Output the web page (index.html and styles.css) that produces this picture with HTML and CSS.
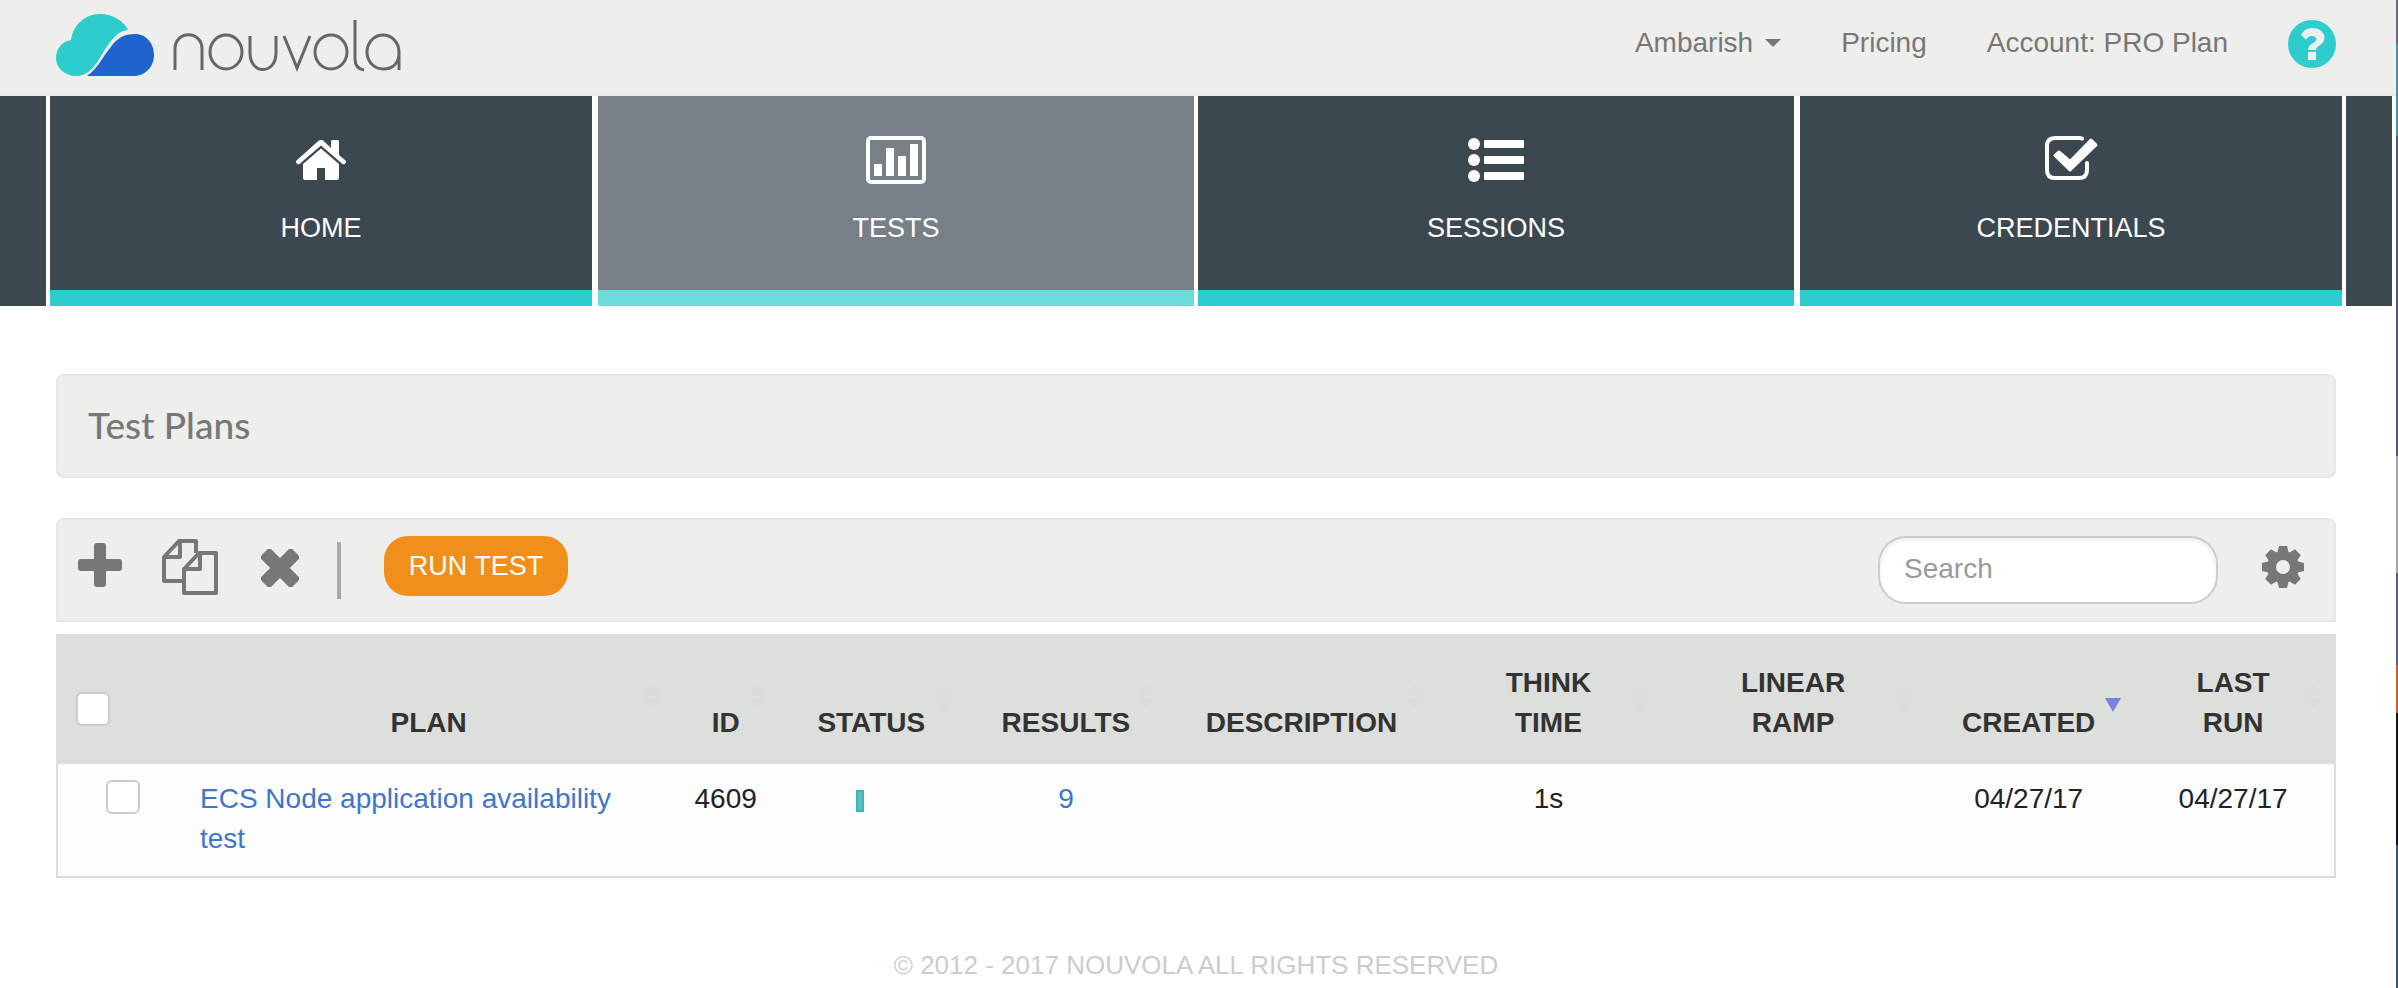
FILE: index.html
```html
<!DOCTYPE html>
<html lang="en">
<head>
<meta charset="utf-8">
<title>Nouvola - Test Plans</title>
<link rel="stylesheet" href="styles.css">
</head>
<body>
<div class="screen">
<div class="page">
  <header class="topbar">
    <a class="brand" href="#" aria-label="nouvola">
      <svg class="logo" viewBox="0 0 346 64" aria-hidden="true">
        <path fill="#2ecdcd" d="M20 63C9 63 0 55 0 45C0 35 7 28 15 27C17 12 29 1 44 1C57 1 68 8 72 17C62 18 57 25 50 35C42 47 36 63 20 63Z"/>
        <path fill="#2063cf" d="M31 63C41 56 46 45 54 35C61 25 68 21 79 21C90 21 98 30 98 42C98 54 89 63 78 63Z"/>
        <g fill="none" stroke="#666" stroke-width="3">
          <path d="M119 57V36C119 17 146 17 146 36V57"/>
          <ellipse cx="170" cy="39" rx="16" ry="17"/>
          <path d="M194 23V40C194 62 220 62 220 40V23"/>
          <path d="M228 23L241 55L254 23"/>
          <ellipse cx="275" cy="39" rx="16" ry="17"/>
          <path d="M299 7V46C299 53 302 56 308 57"/>
          <path d="M343 57V39A16 17 0 1 0 327 56C337 56 343 50 343 39"/>
        </g>
      </svg>
    </a>
    <nav class="account" aria-label="Account">
      <a href="#" class="user">Ambarish <span class="caret"></span></a>
      <a href="#">Pricing</a>
      <a href="#">Account: PRO Plan</a>
      <a href="#" class="help" aria-label="Help">
        <svg viewBox="0 0 48 48"><circle cx="24" cy="24" r="24" fill="#2ecdcd"/><path fill="#eeeeec" d="M20 40h8v-8h-8zM13 15l5 4.500C20 17 21.500 16 24 16c2.500 0 4.500 1.300 4.500 3.200C28.500 23 20 23 20 30h8c0-4.500 8.500-5 8.500-12.500C36.500 12 31 8 24.500 8C19 8 15.500 10.500 13 15z"/></svg>
      </a>
    </nav>
  </header>

  <nav class="tabs" aria-label="Main">
    <span class="tab-end"></span>
    <a class="tab" href="#">
      <svg class="tab-icon" viewBox="0 0 60 48"><path fill="#fff" d="M30 4c1 0 2 .4 2.700 1L40 12V5.500C40 4.600 40.600 4 41.500 4h5c.9 0 1.500.6 1.500 1.500V19l6.500 5.500c.8.800.8 1.500.2 2.200l-1 1.200c-.6.600-1.500.6-2.200 0L30 9.500L8.500 27.900c-.7.600-1.600.6-2.200 0l-1-1.200c-.6-.7-.6-1.400.2-2.200L27.300 5C28 4.400 29 4 30 4zM30 12.500L48 28v14c0 1.200-.8 2-2 2H34V32h-8v12H14c-1.200 0-2-.8-2-2V28z"/></svg>
      <span>HOME</span>
    </a>
    <a class="tab active wide" href="#" aria-current="page">
      <svg class="tab-icon" viewBox="0 0 60 48"><rect x="2" y="2" width="56" height="44" rx="3" fill="none" stroke="#fff" stroke-width="4"/><path fill="#fff" d="M8 28h8v12H8zM20 12h8v28h-8zM32 20h8v20h-8zM44 8h8v32h-8z"/></svg>
      <span>TESTS</span>
    </a>
    <a class="tab wide" href="#">
      <svg class="tab-icon" viewBox="0 0 60 48"><g fill="#fff"><circle cx="8" cy="8" r="6"/><circle cx="8" cy="24" r="6"/><circle cx="8" cy="40" r="6"/><rect x="18" y="4" width="40" height="8" rx="1"/><rect x="18" y="20" width="40" height="8" rx="1"/><rect x="18" y="36" width="40" height="8" rx="1"/></g></svg>
      <span>SESSIONS</span>
    </a>
    <a class="tab" href="#">
      <svg class="tab-icon" viewBox="0 0 60 48"><path fill="none" stroke="#fff" stroke-width="4" stroke-linecap="round" d="M41 2.500Q40 2 38 2H14Q6 2 6 10V34Q6 42 14 42H38Q46 42 46 34V27"/><path fill="#fff" stroke="#fff" stroke-width="3" stroke-linejoin="round" d="M18 16L29 25.500L50 4L55 9L29 34L14 19.500Z"/></svg>
      <span>CREDENTIALS</span>
    </a>
    <span class="tab-end"></span>
  </nav>

  <main class="content">
    <section class="panel heading"><h1>Test Plans</h1></section>

    <section class="panel toolbar">
      <button class="tool add" type="button" aria-label="Add"><svg width="44" height="44" viewBox="0 0 44 44"><path fill="#777" d="M19 0h6a3 3 0 0 1 3 3v13h13a3 3 0 0 1 3 3v6a3 3 0 0 1-3 3H28v13a3 3 0 0 1-3 3h-6a3 3 0 0 1-3-3V28H3a3 3 0 0 1-3-3v-6a3 3 0 0 1 3-3h13V3a3 3 0 0 1 3-3z"/></svg></button>
      <button class="tool copy" type="button" aria-label="Copy"><svg width="56" height="56" viewBox="0 0 56 56"><g fill="none" stroke="#777" stroke-width="4" stroke-linejoin="round"><path d="M22 42H2V18L17 2H34V14M2 18H18V2"/><path d="M22 30L37 14H54V54H22V30H38V14"/></g></svg></button>
      <button class="tool delete" type="button" aria-label="Delete"><svg width="38" height="38" viewBox="-19 -19 38 38"><g fill="#777"><rect x="-22" y="-7" width="44" height="14" rx="3" transform="rotate(45)"/><rect x="-22" y="-7" width="44" height="14" rx="3" transform="rotate(-45)"/></g></svg></button>
      <span class="divider"></span>
      <button class="run" type="button">RUN TEST</button>
      <input class="search" type="search" placeholder="Search" aria-label="Search">
      <button class="tool gear" type="button" aria-label="Settings"><svg width="42" height="42" viewBox="-21 -21 42 42"><g fill="#777"><path id="tooth" d="M-4-21h8l2 8h-12zM-4 21h8l2-8h-12z"/><use href="#tooth" transform="rotate(45)"/><use href="#tooth" transform="rotate(90)"/><use href="#tooth" transform="rotate(135)"/></g><circle r="11.500" fill="none" stroke="#777" stroke-width="9"/></svg></button>
    </section>

    <table class="plans">
      <colgroup><col class="c-check"><col class="c-plan"><col class="c-id"><col class="c-status"><col class="c-results"><col class="c-desc"><col class="c-think"><col class="c-ramp"><col class="c-created"><col></colgroup>
      <thead>
        <tr>
          <th class="check"><input type="checkbox" aria-label="Select all plans"></th>
          <th class="sort">PLAN</th>
          <th class="sort">ID</th>
          <th class="sort">STATUS</th>
          <th class="sort">RESULTS</th>
          <th class="sort">DESCRIPTION</th>
          <th class="sort">THINK<br>TIME</th>
          <th class="sort">LINEAR<br>RAMP</th>
          <th class="sorted" aria-sort="descending">CREATED</th>
          <th class="sort">LAST<br>RUN</th>
        </tr>
      </thead>
      <tbody>
        <tr>
          <td class="check"><input type="checkbox" aria-label="Select ECS Node application availability test"></td>
          <td class="plan"><a href="#">ECS Node application availability test</a></td>
          <td>4609</td>
          <td class="status"><span class="bar"></span></td>
          <td><a href="#">9</a></td>
          <td></td>
          <td>1s</td>
          <td></td>
          <td>04/27/17</td>
          <td>04/27/17</td>
        </tr>
      </tbody>
    </table>
  </main>

  <footer class="footer">© 2012 - 2017 NOUVOLA ALL RIGHTS RESERVED</footer>
</div>
<div class="edge"></div>
</div>
</body>
</html>
```
FILE: styles.css
```css
* { box-sizing: border-box; }

body {
  margin: 0;
  background: #fff;
  color: #222;
  font: 28px/40px "Liberation Sans", Arial, sans-serif;
}

a { color: #3f76cc; text-decoration: none; }
button { border: 0; padding: 0; background: none; font: inherit; cursor: pointer; }
svg { display: block; }

.screen { display: flex; min-height: 100vh; }
.page { flex: 1; min-width: 0; }
.edge {
  width: 2px;
  background: linear-gradient(#6b6a80 0 44px, #4a8fa5 44px 136px, #55527a 136px 456px, #a5a5a5 456px 573px, #5f5b7f 573px 665px, #c0602a 665px 713px, #15121a 713px 845px, #3f5570 845px);
}

/* Header */
.topbar {
  display: flex;
  justify-content: space-between;
  align-items: flex-start;
  height: 96px;
  padding: 0 60px 0 56px;
  background: #eeeeec;
  border-bottom: 2px solid #e7e7e5;
}
.logo { width: 346px; height: 64px; margin-top: 13px; }
.account { display: flex; align-items: flex-start; gap: 60px; padding-top: 23px; }
.account a { color: #777; }
.user { display: flex; align-items: center; gap: 12px; }
.caret { border: 8px solid transparent; border-top-color: #777; border-bottom: 0; }
.help { margin-top: -3px; }
.help svg { width: 48px; height: 48px; }

/* Navigation tabs */
.tabs { display: flex; height: 210px; padding-right: 4px; }
.tab-end { width: 46px; background: #3c4850; }
.tab {
  flex: 542;
  display: flex;
  flex-direction: column;
  align-items: center;
  gap: 24px;
  margin-left: 4px;
  padding-top: 40px;
  background: #3c4850;
  border-bottom: 16px solid #2ecdcd;
  color: #fff;
  font-size: 27px;
}
.tab:nth-child(odd) { margin: 0 0 0 6px; }
.tab:nth-child(3) + .tab { margin-left: 4px; }
.tab:nth-child(5) { margin-right: 4px; }
.tab.wide { flex: 596; }
.tab.active { background: #777f87; border-color: #6cdddd; }
.tab-icon { width: 60px; height: 48px; }

/* Content */
.content { padding: 68px 60px 0 56px; }
.panel {
  display: flex;
  align-items: center;
  height: 104px;
  background: #eeeeec;
  border: 2px solid #e7e7e7;
  border-radius: 8px;
}
.heading { padding: 0 30px 2px; margin-bottom: 40px; }
.heading h1 { margin: 0; color: #777; font: 500 37px/40px Lato, sans-serif; }

.toolbar {
  padding: 0 30px 0 20px;
  margin-bottom: 12px;
  border-radius: 8px 8px 0 0;
}
.tool { display: flex; flex: none; }
.add { padding-bottom: 10px; }
.copy { margin-left: 40px; padding-bottom: 6px; }
.delete { margin-left: 43px; padding-bottom: 4px; }
.divider { width: 4px; height: 57px; margin-left: 38px; background: #a7a9ac; }
.run {
  width: 184px;
  height: 60px;
  margin: 0 auto 8px 43px;
  border-radius: 24px;
  background: #f08f1b;
  color: #fff;
  font-size: 27px;
}
.search {
  width: 340px;
  height: 68px;
  padding: 0 24px 2px;
  border: 2px solid #ccc;
  border-radius: 28px;
  background: #fff;
  box-shadow: inset 0 2px 4px rgba(0, 0, 0, .08);
  color: #555;
  font: inherit;
}
.search::placeholder { color: #999; opacity: 1; }
.gear { margin-left: 44px; padding-bottom: 6px; }

/* Plans table */
.plans {
  width: 100%;
  table-layout: fixed;
  border-collapse: separate;
  border-spacing: 0;
  border: 2px solid #ddd;
  border-top: 0;
  background: #fdfdfd;
  text-align: center;
}
.c-check { width: 126px; }
.c-plan { width: 21.5%; }
.c-id { width: 4.6%; }
.c-status { width: 8.2%; }
.c-results { width: 8.9%; }
.c-desc { width: 11.8%; }
.c-think { width: 9.9%; }
.c-ramp { width: 11.6%; }
.c-created { width: 9.1%; }

.plans th {
  position: relative;
  padding: 29px 0 17px;
  background: #dddfdc;
  border-bottom: 4px solid #ddd;
  color: #333;
  vertical-align: bottom;
}
.plans td { padding: 15px 0 17px; vertical-align: top; }
.plans th.check { padding: 0 0 34px 18px; text-align: left; }
.plans td.check { padding: 16px 0 0 48px; text-align: left; }
.plans td.plan { padding-left: 16px; padding-right: 60px; text-align: left; }

.plans input {
  appearance: none;
  display: block;
  width: 34px;
  height: 34px;
  margin: 0;
  border: 2px solid #ccc;
  border-radius: 6px;
  background: #fff;
}

.sort::before, .sort::after, .sorted::after {
  content: "";
  position: absolute;
  right: 14px;
  border: 7px solid transparent;
}
.sort::before { top: 50px; border-bottom: 12px solid #dbdbdd; border-top: 0; }
.sort::after { top: 64px; border-top: 12px solid #dbdbdd; border-bottom: 0; }
.sorted::after { top: 64px; right: 11px; border-width: 14px 8px 0; border-top-color: #7b80de; }

.bar { display: block; width: 8px; height: 22px; margin: 11px 0 0 78px; background: #5cc0c4; border: 2px solid #3db5b9; }

.footer { padding: 67px 4px 0 0; color: #ccc; font-size: 26px; text-align: center; }
```
